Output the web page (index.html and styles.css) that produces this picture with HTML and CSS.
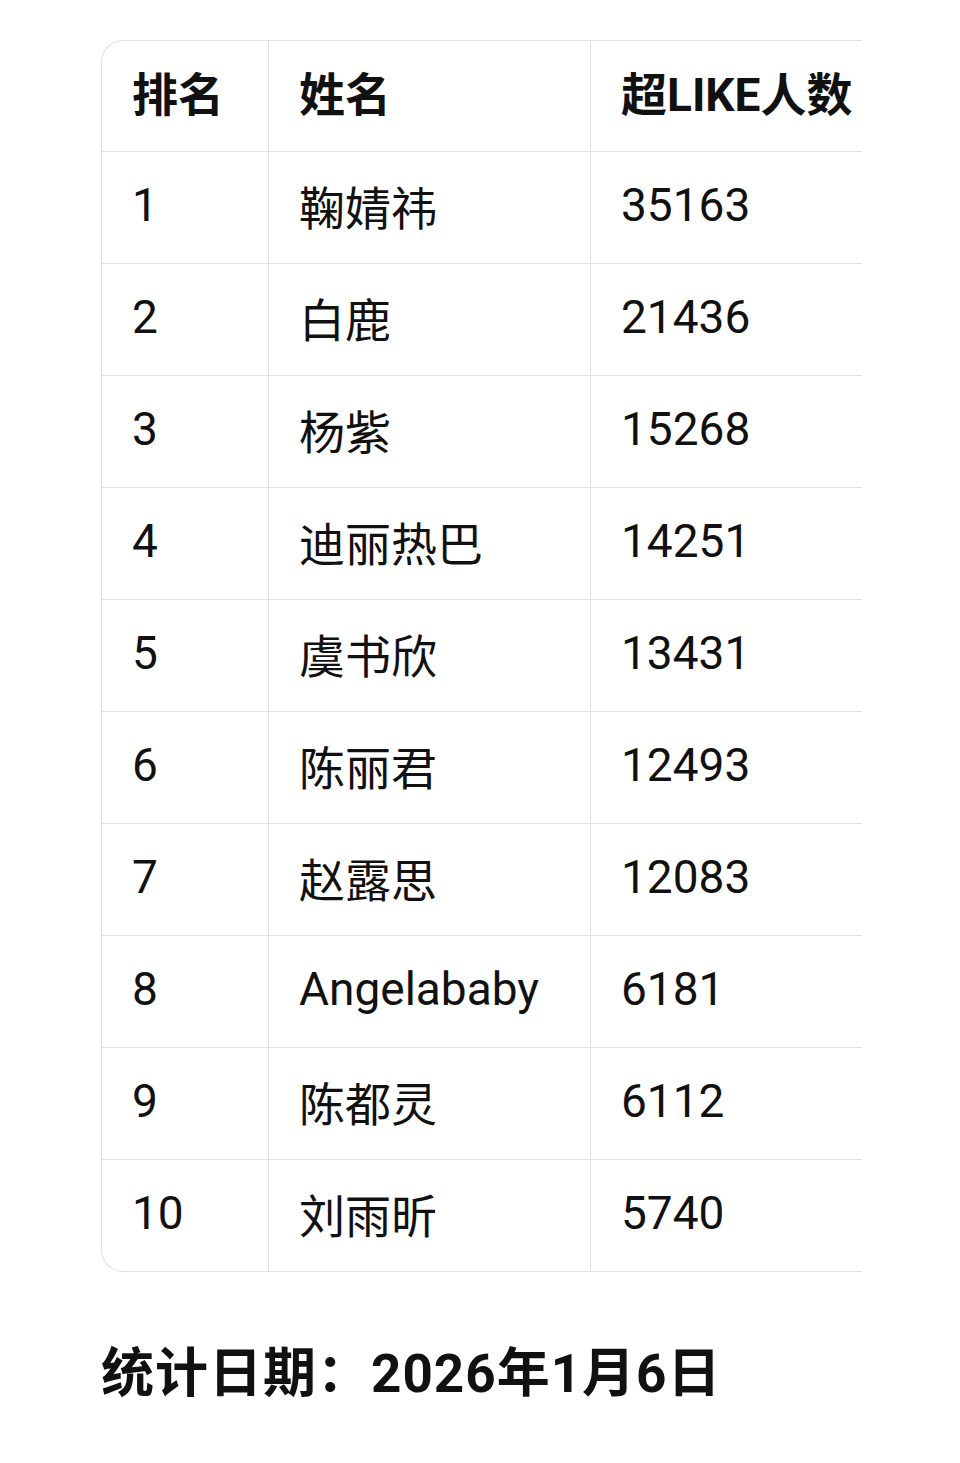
FILE: index.html
```html
<!DOCTYPE html>
<html lang="zh-CN">
<head>
<meta charset="utf-8">
<title>超LIKE人数排名</title>
<link rel="stylesheet" href="styles.css">
</head>
<body>
<main class="page">
  <div class="table-wrap">
    <table class="rank-table">
      <thead>
        <tr><th class="c-rank">排名</th><th class="c-name">姓名</th><th class="c-num">超LIKE人数</th></tr>
      </thead>
      <tbody>
        <tr><td>1</td><td>鞠婧祎</td><td>35163</td></tr>
        <tr><td>2</td><td>白鹿</td><td>21436</td></tr>
        <tr><td>3</td><td>杨紫</td><td>15268</td></tr>
        <tr><td>4</td><td>迪丽热巴</td><td>14251</td></tr>
        <tr><td>5</td><td>虞书欣</td><td>13431</td></tr>
        <tr><td>6</td><td>陈丽君</td><td>12493</td></tr>
        <tr><td>7</td><td>赵露思</td><td>12083</td></tr>
        <tr><td>8</td><td>Angelababy</td><td>6181</td></tr>
        <tr><td>9</td><td>陈都灵</td><td>6112</td></tr>
        <tr><td>10</td><td>刘雨昕</td><td>5740</td></tr>
      </tbody>
    </table>
  </div>
  <p class="footer-date">统计日期：2026年1月6日</p>
</main>
</body>
</html>
```
FILE: styles.css
```css
* { box-sizing: border-box; }
html, body { margin: 0; padding: 0; background: #fff; }
body {
  font-family: Roboto, "Noto Sans CJK SC", sans-serif;
  color: #111;
}
.page {
  padding: 40px 0 0 101px;
}
.table-wrap {
  width: 761px;
  overflow: hidden;
  border: 1px solid #e0e0e0;
  border-right: none;
  border-radius: 22px 0 0 22px;
}
.rank-table {
  border-collapse: separate;
  border-spacing: 0;
  table-layout: fixed;
  width: 900px;
}
.c-rank { width: 166px; }
.c-name { width: 322px; }
.c-num { width: 412px; }
.rank-table th,
.rank-table td {
  text-align: left;
  vertical-align: middle;
  padding: 0 0 0 30px;
  white-space: nowrap;
  font-size: 46px;
}
.rank-table th {
  height: 110px;
  padding-bottom: 10px;
  font-weight: 700;
}
.rank-table td {
  height: 112px;
  padding-bottom: 6px;
  font-weight: 400;
  border-top: 1px solid #e0e0e0;
}
.rank-table th + th,
.rank-table td + td {
  border-left: 1px solid #e0e0e0;
}
.footer-date {
  margin: 68px 0 0 0;
  font-size: 53px;
  font-weight: 700;
  letter-spacing: 1px;
  line-height: 1.3;
}
```
